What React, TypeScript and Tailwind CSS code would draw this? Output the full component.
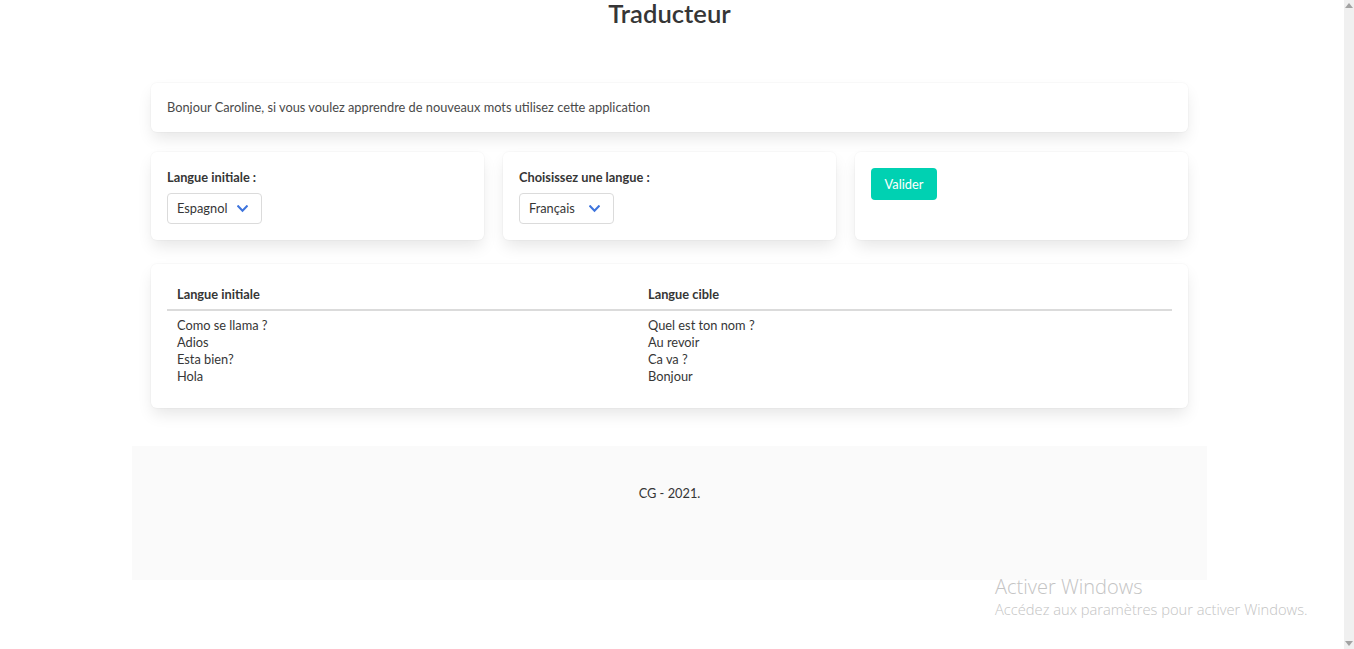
import React from "react";

const card =
  "bg-white rounded-[6px] shadow-[0_8px_16px_-2px_rgba(10,10,10,0.1),0_0_0_1px_rgba(10,10,10,0.02)]";

function Chevron() {
  return (
    <svg width="11" height="8" viewBox="0 0 11 8" className="absolute right-[13px] top-[11px]">
      <polyline points="1.2,1.2 5.5,5.8 9.8,1.2" fill="none" stroke="#3e74dd" strokeWidth="2" strokeLinecap="square" />
    </svg>
  );
}

function Select({ value }: { value: string }) {
  return (
    <div className="relative h-[31px] w-[95px] rounded-[4px] border border-[#dbdbdb] bg-white pl-[9px] leading-[29px] text-[#363636]">
      {value}
      <Chevron />
    </div>
  );
}

export default function App() {
  const left = ["Como se llama ?", "Adios", "Esta bien?", "Hola"];
  const right = ["Quel est ton nom ?", "Au revoir", "Ca va ?", "Bonjour"];
  return (
    <div className="relative flex h-[649px] w-[1354px] overflow-hidden bg-white font-['Lato',sans-serif] text-[12.8px] text-[#4a4a4a]">
      <div className="w-[1344px]">
        <div className="ml-[132px] w-[1075px]">
          <h1 className="h-[29px] text-center text-[25.6px] font-semibold leading-[26px] text-[#363636]">
            Traducteur
          </h1>
          <div className="px-[19px]">
            <div className={`${card} mt-[54px] h-[49px] px-[16px] py-[16px] leading-[17px]`}>
              Bonjour Caroline, si vous voulez apprendre de nouveaux mots utilisez cette application
            </div>
            <div className="mt-[20px] grid grid-cols-3 gap-[19px]">
              <div className={`${card} h-[88px] p-[16px]`}>
                <div className="mb-[6px] h-[19px] font-bold leading-[19px] text-[#363636]">Langue initiale :</div>
                <Select value="Espagnol" />
              </div>
              <div className={`${card} h-[88px] p-[16px]`}>
                <div className="mb-[6px] h-[19px] font-bold leading-[19px] text-[#363636]">Choisissez une langue :</div>
                <Select value="Français" />
              </div>
              <div className={`${card} h-[88px] p-[16px]`}>
                <button className="h-[32px] w-[66px] rounded-[4px] bg-[#00d1b2] text-center leading-[32px] text-white">
                  Valider
                </button>
              </div>
            </div>
            <div className={`${card} mt-[24px] h-[144px] p-[16px]`}>
              <div className="grid grid-cols-[471px_1fr] border-b-2 border-[#dbdbdb] font-bold text-[#363636]">
                <div className="h-[29px] px-[10px] leading-[29px]">Langue initiale</div>
                <div className="h-[29px] px-[10px] leading-[29px]">Langue cible</div>
              </div>
              <div className="grid grid-cols-[471px_1fr] pt-[6px] leading-[17px] text-[#363636]">
                <div className="px-[10px]">
                  {left.map((t) => (
                    <div key={t}>{t}</div>
                  ))}
                </div>
                <div className="px-[10px]">
                  {right.map((t) => (
                    <div key={t}>{t}</div>
                  ))}
                </div>
              </div>
            </div>
          </div>
          <footer className="mt-[38px] h-[134px] bg-[#fafafa] pt-[38px] text-center leading-[19px] text-[#363636]">
            CG - 2021.
          </footer>
        </div>
      </div>
      <div className="relative h-full w-[10px] bg-[#f0f0f0]">
        <svg width="8" height="5" viewBox="0 0 8 5" className="absolute left-[1px] top-[3px]">
          <polygon points="0,5 4,0 8,5" fill="#a3a3a3" />
        </svg>
        <svg width="8" height="5" viewBox="0 0 8 5" className="absolute bottom-[3px] left-[1px]">
          <polygon points="0,0 8,0 4,5" fill="#a3a3a3" />
        </svg>
      </div>
      <div className="absolute left-[995px] top-[573px] font-['Open_Sans',sans-serif] font-light text-[#c4c4c4]">
        <div className="text-[20px] leading-[27px]">Activer Windows</div>
        <div className="text-[14.7px] leading-[19px]">Accédez aux paramètres pour activer Windows.</div>
      </div>
    </div>
  );
}
